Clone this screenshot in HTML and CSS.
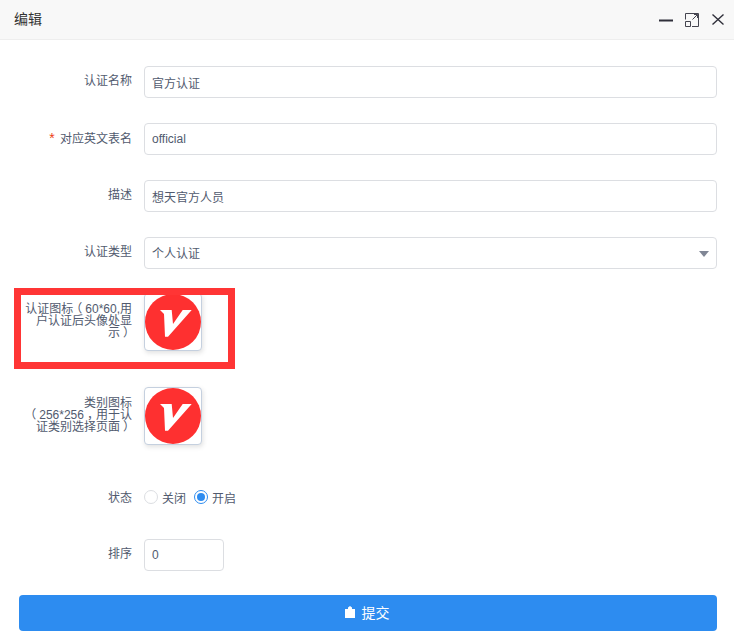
FILE: index.html
```html
<!DOCTYPE html>
<html lang="zh-CN">
<head>
<meta charset="utf-8">
<title>编辑</title>
<link rel="stylesheet" href="styles.css">
</head>
<body>
<div class="dialog">
  <header class="title-bar">
    <span class="title">编辑</span>
    <div class="window-actions">
      <svg class="win-icon" viewBox="0 0 16 16"><path d="M1 8.500h14" stroke="#2f2f3a" stroke-width="2" fill="none"/></svg>
      <svg class="win-icon" viewBox="0 0 16 16"><path d="M1.500 7.500V1.500h13v13h-6.500M8.500 7.500l5-5M10 2.500h3.500V6M1.500 9.500h5v5h-5z" stroke="#44444f" stroke-width="1" fill="none"/></svg>
      <svg class="win-icon" viewBox="0 0 16 16"><path d="M2.500 2.500l11 10M13.500 2.500l-11 10" stroke="#2f2f3a" stroke-width="1.400" fill="none"/></svg>
    </div>
  </header>
  <form class="form">
    <div class="row row-text">
      <label class="label">认证名称</label>
      <div class="field"><input class="input" value="官方认证"></div>
    </div>
    <div class="row row-text">
      <label class="label"><span class="req">*</span> 对应英文表名</label>
      <div class="field"><input class="input" value="official"></div>
    </div>
    <div class="row row-text">
      <label class="label">描述</label>
      <div class="field"><input class="input" value="想天官方人员"></div>
    </div>
    <div class="row row-text row-select">
      <label class="label">认证类型</label>
      <div class="field"><div class="select">个人认证<span class="caret"></span></div></div>
    </div>
    <div class="row row-upload">
      <label class="label label-long">
        <span class="line">认证图标<span class="punct-left">（</span>60*60,用</span>
        <span class="line">户认证后头像处显</span>
        <span class="line">示<span class="punct-right">）</span></span>
      </label>
      <div class="upload">
        <svg class="logo" viewBox="0 0 56 56"><circle cx="28" cy="28" r="28" fill="#fe3030"/><path d="M15 16h11.700L28 30l9.700-14h9L23 42.700h-3L19 20z" fill="#fff"/></svg>
      </div>
    </div>
    <div class="row row-upload">
      <label class="label label-long">
        <span class="line">类别图标</span>
        <span class="line"><span class="punct-left">（</span>256*256<span class="punct-right">，</span>用于认</span>
        <span class="line">证类别选择页面<span class="punct-right">）</span></span>
      </label>
      <div class="upload">
        <svg class="logo" viewBox="0 0 56 56"><circle cx="28" cy="28" r="28" fill="#fe3030"/><path d="M15 16h11.700L28 30l9.700-14h9L23 42.700h-3L19 20z" fill="#fff"/></svg>
      </div>
    </div>
    <div class="row row-radio">
      <label class="label">状态</label>
      <div class="radios">
        <span class="radio-item"><span class="radio"></span>关闭</span>
        <span class="radio-item"><span class="radio radio-on"></span>开启</span>
      </div>
    </div>
    <div class="row row-sort">
      <label class="label">排序</label>
      <div class="field-short"><input class="input" value="0"></div>
    </div>
    <button class="submit" type="button">
      <svg class="submit-icon" viewBox="0 0 10 12"><path d="M0 3h3V1.500L5 0l2 1.500V3h3v9H0z" fill="#fff"/></svg><span class="submit-text">提交</span>
    </button>
  </form>
  <div class="annotation"></div>
</div>
</body>
</html>
```
FILE: styles.css
```css
* { box-sizing: border-box; }
html, body { margin: 0; padding: 0; background: #fff; }
body { font-family: "Liberation Sans", "Noto Sans CJK SC", sans-serif; font-size: 12px; color: #515a6e; }
.dialog { position: relative; width: 734px; height: 641px; overflow: hidden; }
.title-bar { height: 40px; background: #f8f8f8; border-bottom: 1px solid #eeeeee; display: flex; align-items: center; justify-content: space-between; padding: 0 8px 0 14px; }
.title { font-size: 14px; color: #333; margin-top: -4px; }
.window-actions { display: flex; gap: 10px; align-items: center; padding-top: 1px; }
.win-icon { width: 16px; height: 16px; display: block; }
.form { padding: 26px 17px 0 19px; }
.row { display: flex; align-items: flex-start; }
.row-text { height: 32px; margin-bottom: 25px; }
.row-select { margin-bottom: 24px; }
.label { width: 113px; flex: none; text-align: right; line-height: 12px; color: #515a6e; }
.row-text > .label { padding-top: 3px; line-height: 24px; }
.label-long { padding-top: 10px; }
.line { display: block; white-space: nowrap; }
.req { color: #ed4014; font-size: 14px; margin-right: 2px; }
.punct-left { display: inline-block; transform: translateX(-3px); }
.punct-right { display: inline-block; transform: translateX(3px); }
.field { flex: 1; margin-left: 12px; }
.field-short { width: 80px; margin-left: 12px; }
.input, .select { display: block; width: 100%; height: 32px; border: 1px solid #dcdee2; border-radius: 4px; padding: 0 7px; font: inherit; color: #515a6e; background: #fff; outline: none; }
.select { position: relative; line-height: 32px; }
.caret { position: absolute; right: 7px; top: 13px; width: 0; height: 0; border-left: 5px solid transparent; border-right: 5px solid transparent; border-top: 6px solid #808695; }
.row-upload { height: 58px; margin-bottom: 36px; }
.upload { width: 58px; height: 58px; margin-left: 12px; border: 1px solid #c5d0df; border-radius: 4px; overflow: hidden; background: #fff; padding: 0; box-shadow: 1px 2px 5px rgba(0,0,0,.12); }
.logo { width: 56px; height: 56px; display: block; }
.row-radio { height: 32px; margin-bottom: 26px; }
.row-radio > .label { line-height: 34px; }
.radios { margin-left: 12px; display: flex; height: 32px; align-items: center; gap: 8px; }
.radio-item { display: flex; align-items: center; gap: 4px; }
.radio { width: 14px; height: 14px; border: 1px solid #dcdee2; border-radius: 50%; background: #fff; position: relative; display: block; }
.radio-on { border-color: #2d8cf0; }
.radio-on::after { content: ""; position: absolute; left: 2px; top: 2px; width: 8px; height: 8px; border-radius: 50%; background: #2d8cf0; }
.row-sort { height: 32px; margin-bottom: 24px; }
.row-sort > .label { line-height: 24px; padding-top: 3px; }
.submit { display: flex; width: 698px; height: 36px; border: 0; border-radius: 4px; background: #2d8cf0; color: #fff; font: inherit; font-size: 14px; align-items: center; justify-content: center; gap: 7px; padding: 0 2px 3px 0; }
.submit-icon { width: 10px; height: 12px; display: block; }
.annotation { position: absolute; left: 14px; top: 288px; width: 221px; height: 81px; border: 7px solid #ff3535; pointer-events: none; }
```
